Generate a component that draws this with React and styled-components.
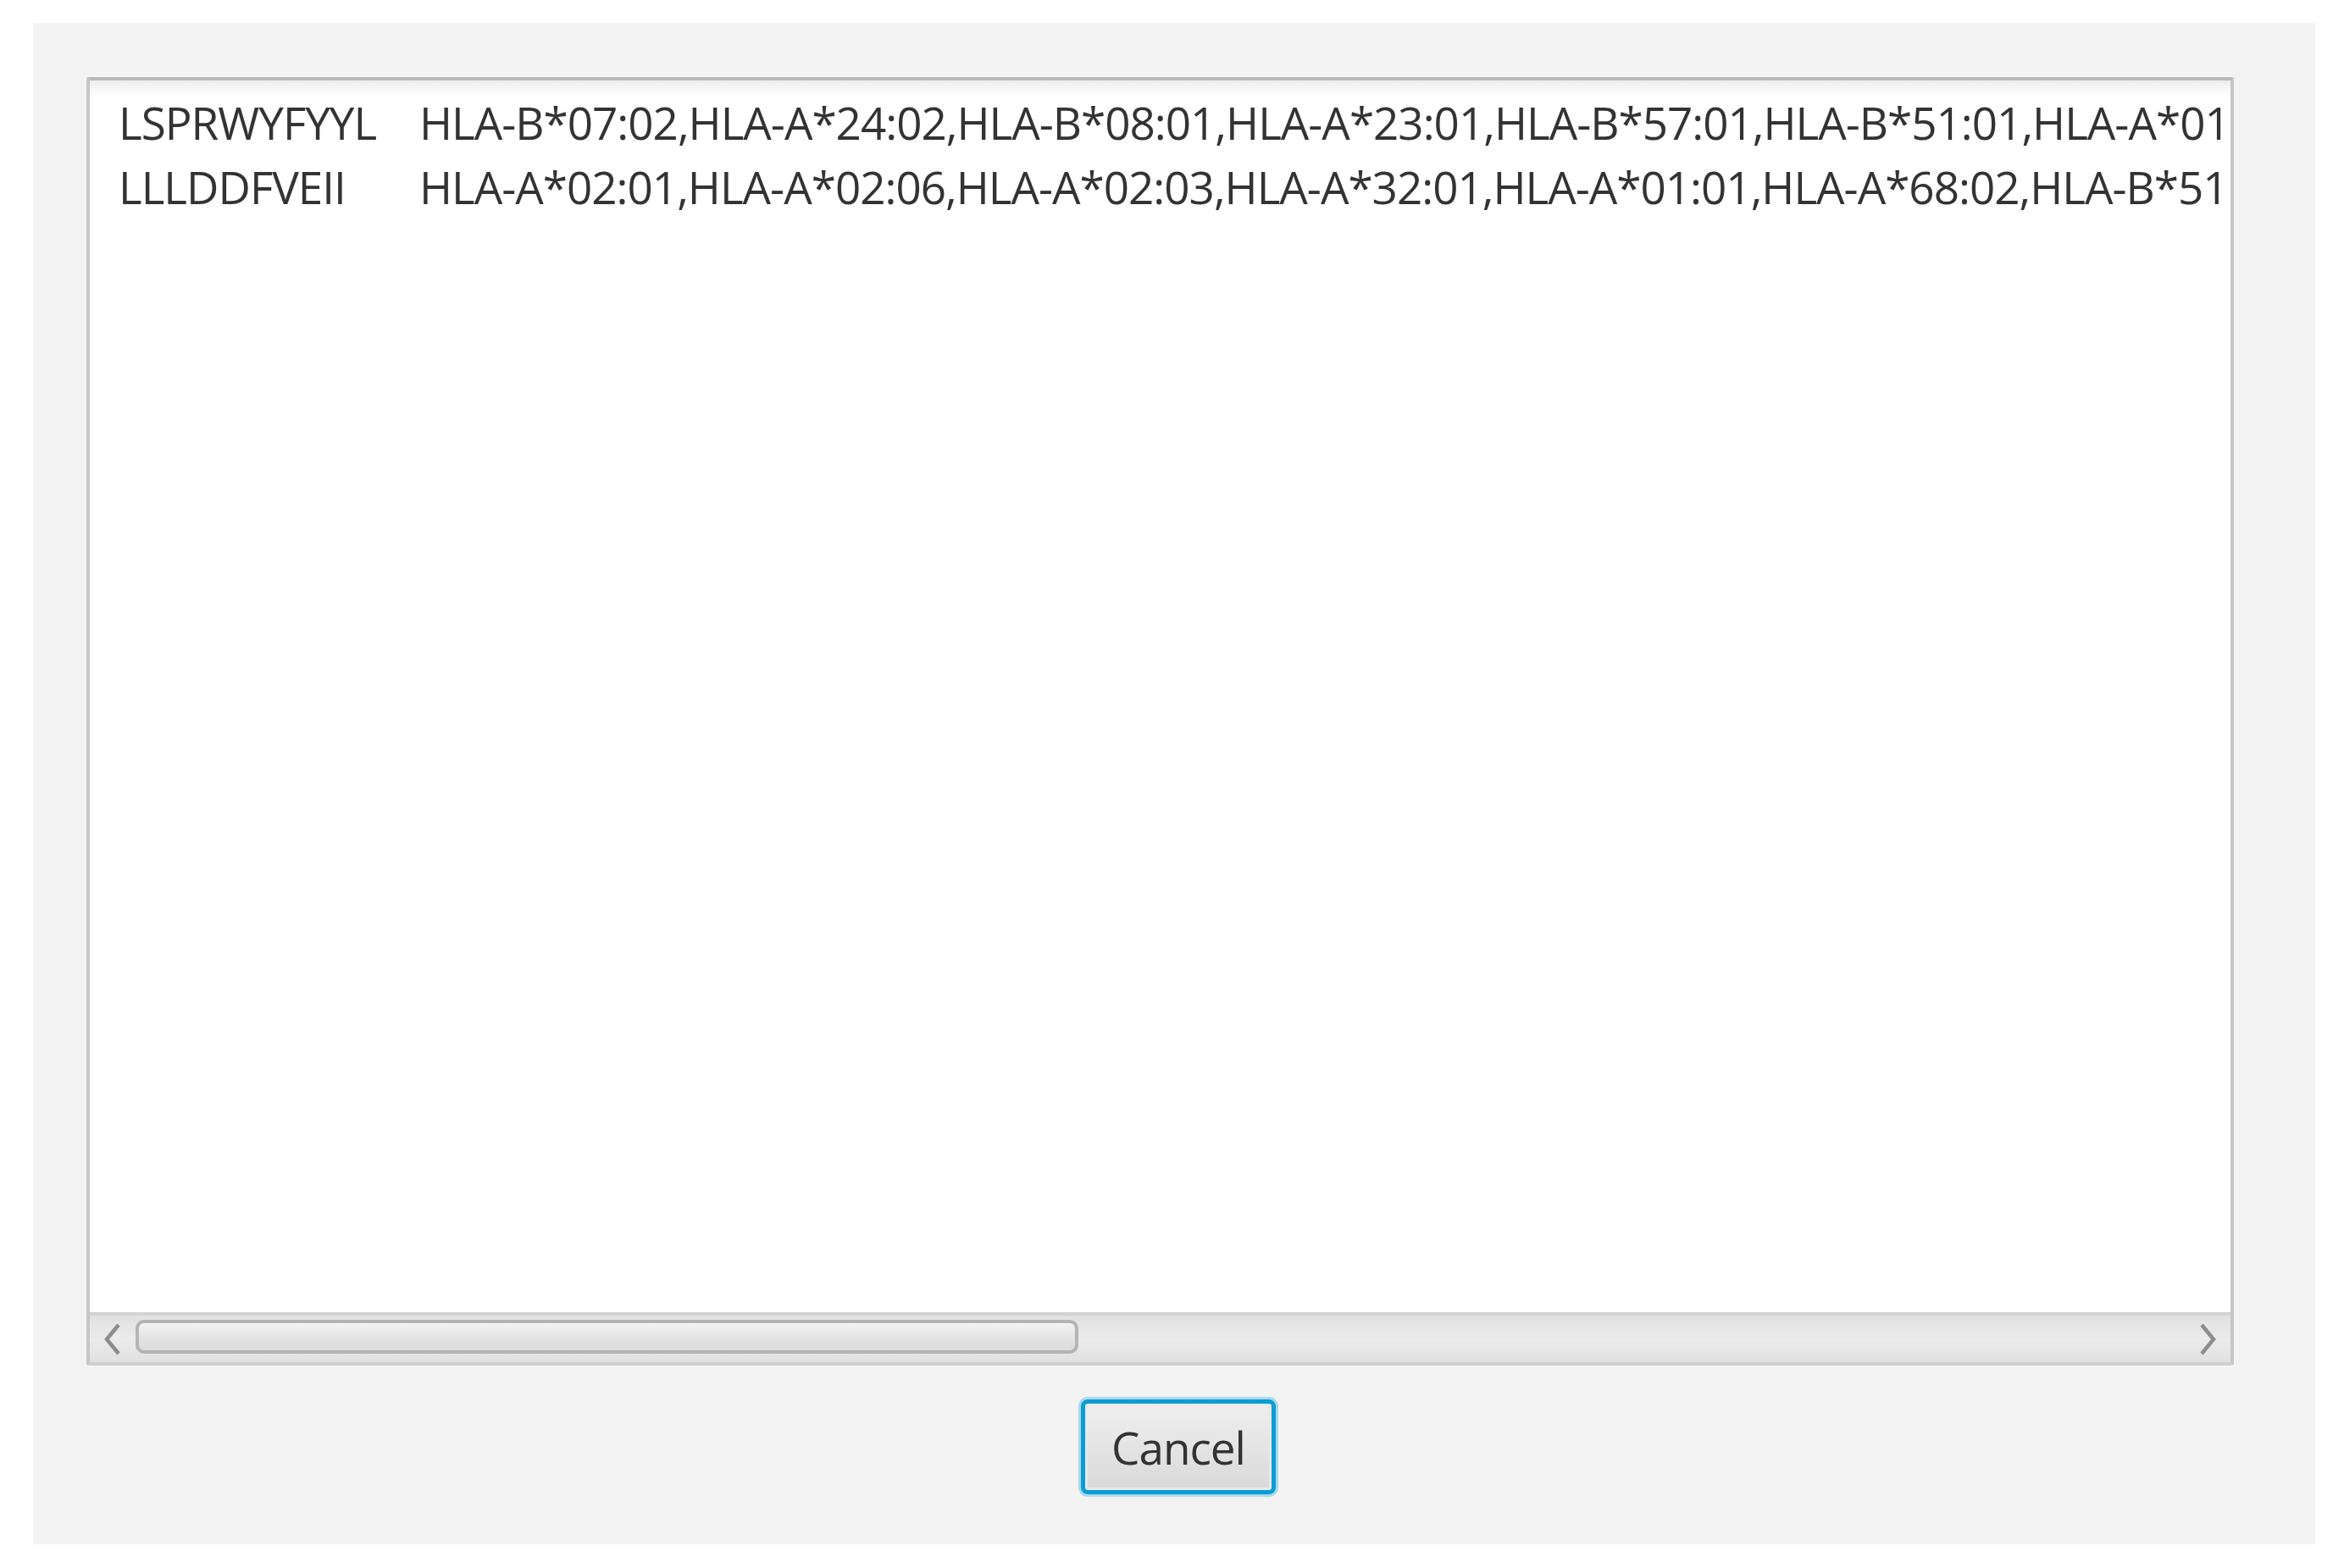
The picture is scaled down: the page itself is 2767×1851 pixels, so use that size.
import styled, { createGlobalStyle } from 'styled-components';

const rows = [
  {
    peptide: 'LSPRWYFYYL',
    alleles:
      'HLA-B*07:02,HLA-A*24:02,HLA-B*08:01,HLA-A*23:01,HLA-B*57:01,HLA-B*51:01,HLA-A*01:01,HLA-B*35:01,HLA-A*03:01',
  },
  {
    peptide: 'LLLDDFVEII',
    alleles:
      'HLA-A*02:01,HLA-A*02:06,HLA-A*02:03,HLA-A*32:01,HLA-A*01:01,HLA-A*68:02,HLA-B*51:01,HLA-B*07:02,HLA-A*24:02',
  },
];

const GlobalStyle = createGlobalStyle`
  body {
    margin: 0;
    background: #ffffff;
    font-family: "Open Sans", "Noto Sans", sans-serif;
  }
`;

export default function App() {
  return (
    <>
      <GlobalStyle />
      <Window>
        <ResultList>
          <ListBody>
            {rows.map(row => (
              <Row key={row.peptide}>
                <Peptide>{row.peptide}</Peptide>
                <Alleles>{row.alleles}</Alleles>
              </Row>
            ))}
          </ListBody>
          <ScrollBar>
            <ArrowButton>
              <svg width="20" height="38" viewBox="0 0 20 38">
                <polyline
                  points="17,2 3,19 17,36"
                  fill="none"
                  stroke="#8c8c8c"
                  strokeWidth="4.5"
                />
              </svg>
            </ArrowButton>
            <Track>
              <Thumb />
            </Track>
            <ArrowButton>
              <svg width="20" height="38" viewBox="0 0 20 38">
                <polyline
                  points="3,2 17,19 3,36"
                  fill="none"
                  stroke="#8c8c8c"
                  strokeWidth="4.5"
                />
              </svg>
            </ArrowButton>
          </ScrollBar>
        </ResultList>
        <ButtonRow>
          <CancelButton>Cancel</CancelButton>
        </ButtonRow>
      </Window>
    </>
  );
}

const Window = styled.div`
  margin: 27px 0 0 39px;
  width: 2694px;
  height: 1796px;
  background: #f3f3f3;
  box-sizing: border-box;
  padding-top: 64px;
  display: flex;
  flex-direction: column;
`;

const ResultList = styled.div`
  margin: 0 96px 0 63px;
  height: 1521px;
  box-sizing: border-box;
  border: 4px solid #c6c6c6;
  border-top-color: #b9b9b9;
  border-bottom-color: #cfcfcf;
  border-radius: 3px;
  display: flex;
  flex-direction: column;
  background: #ffffff;
`;

const ListBody = styled.div`
  flex: 1;
  overflow: hidden;
  padding-top: 12px;
  background: linear-gradient(#ededed, #ffffff 18px);
`;

const Row = styled.div`
  display: grid;
  grid-template-columns: 355px auto;
  height: 76px;
  line-height: 76px;
  padding-left: 34px;
  font-size: 53px;
  letter-spacing: -1px;
  color: #333333;
  white-space: nowrap;
`;

const Peptide = styled.span``;

const Alleles = styled.span``;

const ScrollBar = styled.div`
  height: 55px;
  border-top: 4px solid #d3d3d3;
  background: linear-gradient(#e1e1e1, #ebebeb 50%, #e1e1e1);
  display: flex;
`;

const ArrowButton = styled.div`
  width: 54px;
  display: flex;
  align-items: center;
  justify-content: center;
`;

const Track = styled.div`
  flex: 1;
  padding-top: 5px;
`;

const Thumb = styled.div`
  width: 46%;
  height: 40px;
  box-sizing: border-box;
  border: 4px solid #b4b4b4;
  border-radius: 10px;
  background: linear-gradient(#f4f4f4, #e6e6e6 45%, #dadada);
`;

const ButtonRow = styled.div`
  display: flex;
  justify-content: center;
  padding: 40px 0 0 10px;
`;

const CancelButton = styled.button`
  width: 230px;
  height: 112px;
  box-sizing: border-box;
  border: 5px solid #0a9dd6;
  border-radius: 8px;
  box-shadow: 0 0 0 3px rgba(3, 158, 211, 0.3), inset 0 0 0 3px #e9e9e9;
  background: linear-gradient(#efefef, #e4e4e4 50%, #d9d9d9);
  font-family: "Open Sans", "Noto Sans", sans-serif;
  font-size: 53px;
  letter-spacing: -1px;
  color: #333333;
  padding: 0;
`;
